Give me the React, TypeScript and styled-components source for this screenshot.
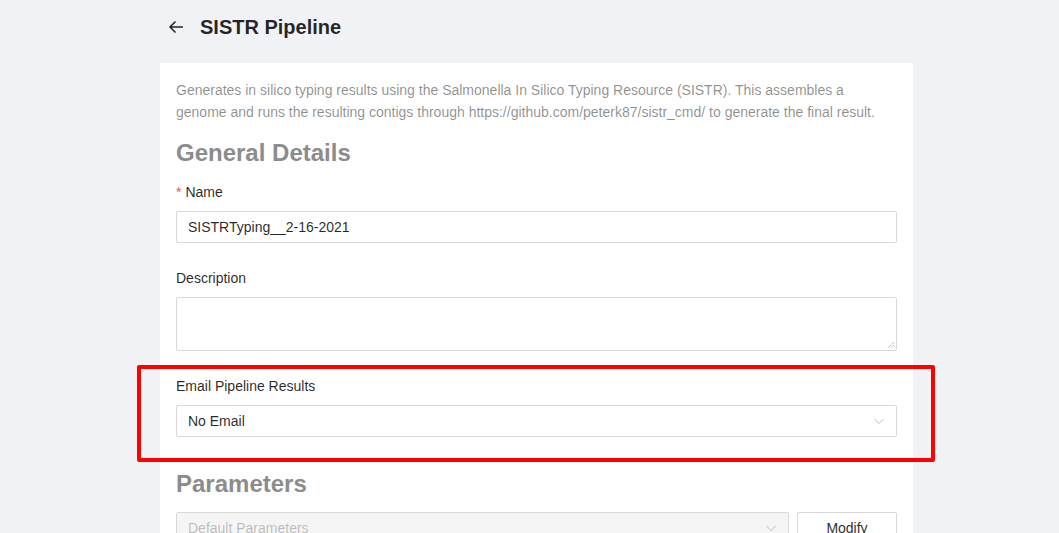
import React from "react";
import styled, { createGlobalStyle } from "styled-components";

const Global = createGlobalStyle`
  html, body { margin: 0; padding: 0; background: #f0f2f5; overflow: hidden; }
  body { font-family: "Liberation Sans", Arial, sans-serif; color: rgba(0,0,0,0.85); font-size: 14px; }
  * { box-sizing: border-box; }
`;

const Page = styled.div`
  width: 753px;
  margin-left: 160px;
  height: 533px;
`;

const Header = styled.div`
  height: 63px;
  display: flex;
  align-items: center;
  padding-left: 8px;
  padding-bottom: 9px;
  gap: 16px;
`;

const Back = styled.span`
  display: inline-flex;
  width: 16px;
  height: 16px;
  color: rgba(0,0,0,0.85);
`;

const Title = styled.h1`
  margin: 0;
  font-size: 20px;
  font-weight: 700;
  line-height: 32px;
  color: rgba(0,0,0,0.85);
`;

const Card = styled.div`
  position: relative;
  background: #fff;
  padding: 16px;
`;

const Desc = styled.p`
  margin: 0 0 14px;
  color: rgba(0,0,0,0.45);
  font-size: 14px;
  line-height: 22px;
`;

const SectionTitle = styled.h3<{ $top?: number }>`
  margin: ${(p) => p.$top ?? 0}px 0 12px;
  font-size: 24px;
  line-height: 32px;
  font-weight: 700;
  color: #8c8c8c;
`;

const Item = styled.div`
  margin-bottom: 24px;
`;

const Label = styled.label`
  display: block;
  font-size: 14px;
  line-height: 22px;
  padding-bottom: 8px;
  color: rgba(0,0,0,0.85);
`;

const Req = styled.span`
  color: #ff4d4f;
  margin-right: 4px;
`;

const Input = styled.div`
  height: 32px;
  border: 1px solid #d9d9d9;
  border-radius: 2px;
  padding: 4px 11px;
  line-height: 22px;
  font-size: 14px;
  color: rgba(0,0,0,0.85);
  background: #fff;
`;

const TextArea = styled.div`
  position: relative;
  height: 54px;
  border: 1px solid #d9d9d9;
  border-radius: 2px;
  background: #fff;
`;

const Grip = styled.svg`
  position: absolute;
  right: 1px;
  bottom: 1px;
`;

const Select = styled.div<{ $disabled?: boolean }>`
  flex: 1;
  height: 32px;
  border: 1px solid #d9d9d9;
  border-radius: 2px;
  padding: 0 11px;
  display: flex;
  align-items: center;
  justify-content: space-between;
  font-size: 14px;
  color: ${(p) => (p.$disabled ? "rgba(0,0,0,0.25)" : "rgba(0,0,0,0.85)")};
  background: ${(p) => (p.$disabled ? "#f5f5f5" : "#fff")};
`;

const Row = styled.div`
  display: flex;
  gap: 8px;
`;

const Button = styled.button`
  width: 100px;
  height: 32px;
  border: 1px solid #d9d9d9;
  border-radius: 2px;
  background: #fff;
  font-family: inherit;
  font-size: 14px;
  color: rgba(0,0,0,0.85);
`;

const Highlight = styled.div`
  position: absolute;
  left: -23px;
  top: 302px;
  width: 798px;
  height: 97px;
  border: 4px solid #ff0000;
  border-radius: 2px;
  pointer-events: none;
`;

const Chevron = () => (
  <svg width="12" height="12" viewBox="0 0 12 12" fill="none">
    <path d="M1.5 4 L6 8.5 L10.5 4" stroke="#bfbfbf" strokeWidth="1" />
  </svg>
);

export default function App() {
  return (
    <>
      <Global />
      <Page>
        <Header>
          <Back>
            <svg width="16" height="16" viewBox="0 0 16 16" fill="none">
              <path d="M15 8 H2 M7.5 2.5 L2 8 L7.5 13.5" stroke="currentColor" strokeWidth="1.5" />
            </svg>
          </Back>
          <Title>SISTR Pipeline</Title>
        </Header>
        <Card>
          <Desc>
            Generates in silico typing results using the Salmonella In Silico Typing Resource (SISTR). This
            assembles a genome and runs the resulting contigs through https://github.com/peterk87/sistr_cmd/ to
            generate the final result.
          </Desc>
          <SectionTitle>General Details</SectionTitle>
          <Item>
            <Label><Req>*</Req>Name</Label>
            <Input>SISTRTyping__2-16-2021</Input>
          </Item>
          <Item>
            <Label>Description</Label>
            <TextArea>
              <Grip width="9" height="9" viewBox="0 0 9 9">
                <path d="M8 2 L2 8 M8 5 L5 8" stroke="#999" strokeWidth="1" strokeDasharray="1 1" />
              </Grip>
            </TextArea>
          </Item>
          <Item>
            <Label>Email Pipeline Results</Label>
            <Select>
              <span>No Email</span>
              <Chevron />
            </Select>
          </Item>
          <SectionTitle $top={31}>Parameters</SectionTitle>
          <Row>
            <Select $disabled>
              <span>Default Parameters</span>
              <Chevron />
            </Select>
            <Button>Modify</Button>
          </Row>
          <Highlight />
        </Card>
      </Page>
    </>
  );
}
